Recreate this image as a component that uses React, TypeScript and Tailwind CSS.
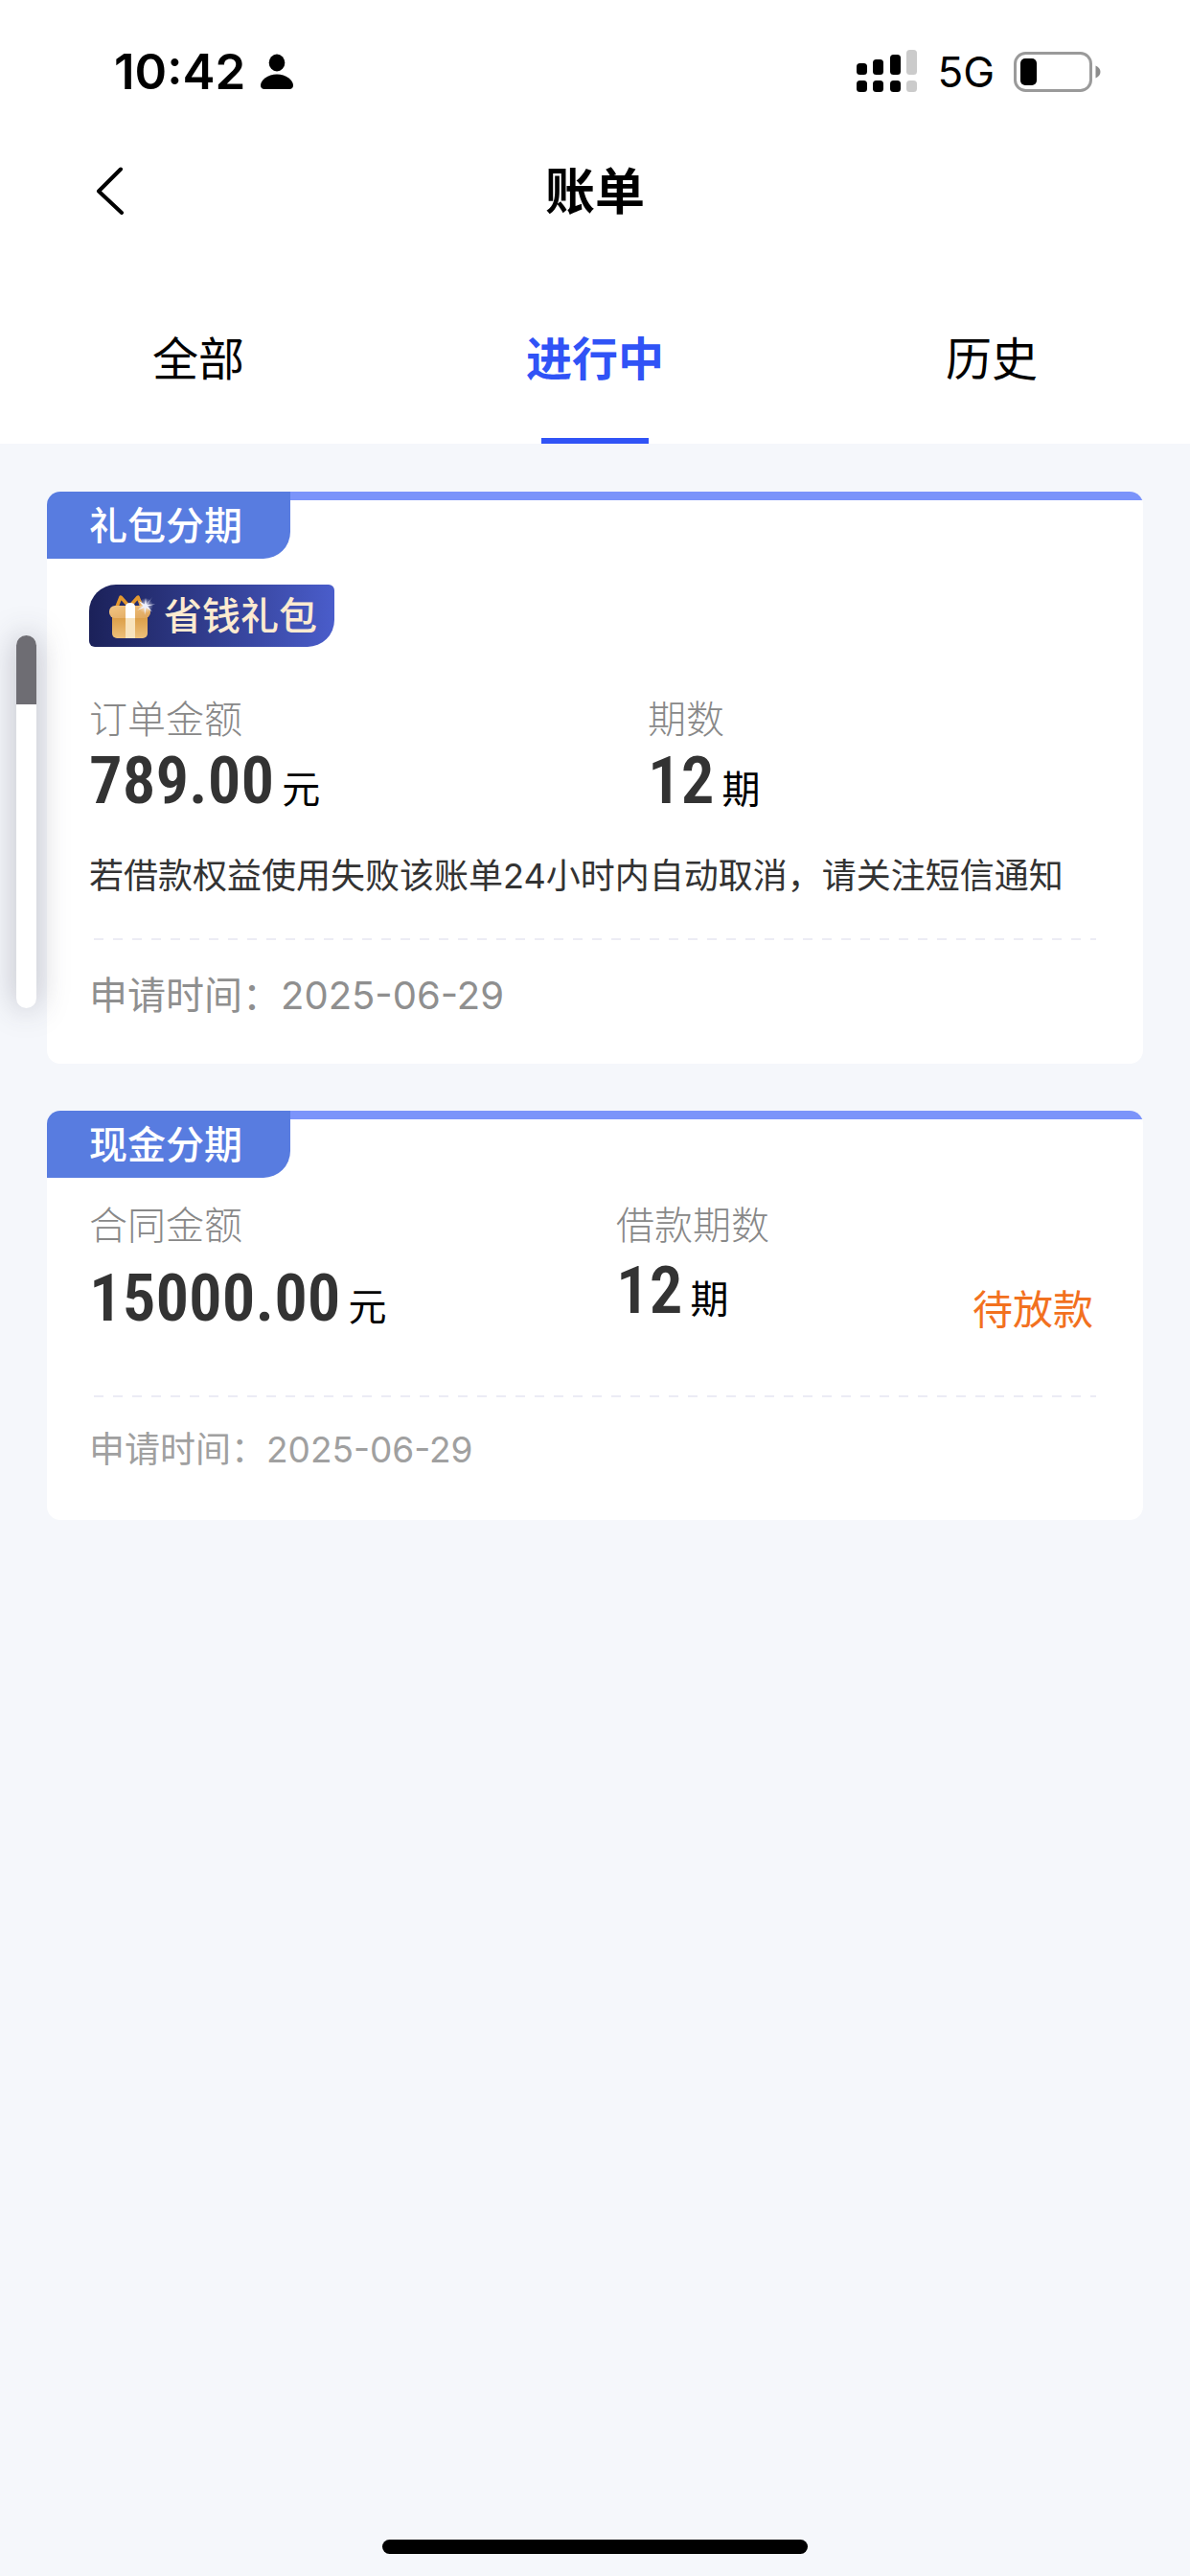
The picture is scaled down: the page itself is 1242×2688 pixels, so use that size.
import React, { useState } from "react";
import { clsx } from "clsx";

const TABS = ["全部", "进行中", "历史"];

const SignalIcon = () => (
  <svg width="64" height="46" viewBox="0 0 64 46" aria-hidden="true">
    <g fill="#000">
      <rect x="0" y="14" width="11" height="12" rx="3.5" />
      <rect x="17" y="10" width="11" height="16" rx="3.5" />
      <rect x="35" y="5" width="11" height="21" rx="3.5" />
      <rect x="0" y="32" width="11" height="12" rx="3.5" />
      <rect x="17" y="32" width="11" height="12" rx="3.5" />
      <rect x="35" y="32" width="11" height="12" rx="3.5" />
    </g>
    <g fill="#cbcbcb">
      <rect x="52" y="0" width="11" height="26" rx="3.5" />
      <rect x="52" y="32" width="11" height="12" rx="3.5" />
    </g>
  </svg>
);

const BatteryIcon = () => (
  <svg width="92" height="42" viewBox="0 0 92 42" aria-hidden="true">
    <rect x="1.5" y="1.5" width="79" height="39" rx="11" fill="none" stroke="#9a9a9a" strokeWidth="3" />
    <rect x="7" y="7" width="17" height="28" rx="5" fill="#000" />
    <path d="M85.5 14.5c3.2 1.2 5 3.7 5 6.5s-1.8 5.3-5 6.5z" fill="#8c8c8c" />
  </svg>
);

const PersonIcon = () => (
  <svg width="34" height="38" viewBox="0 0 34 38" aria-hidden="true">
    <ellipse cx="17" cy="9.5" rx="8.3" ry="9" />
    <path d="M17 21.5c9.5 0 17 6 17 11.5 0 2.5-1.5 4-4 4H4c-2.5 0-4-1.5-4-4 0-5.5 7.5-11.5 17-11.5z" />
  </svg>
);

const GiftIcon = () => (
  <svg width="50" height="46" viewBox="0 0 50 46" aria-hidden="true">
    <defs>
      <linearGradient id="giftLid" x1="0" y1="0" x2="1" y2="1">
        <stop offset="0" stopColor="#f2c684" />
        <stop offset="1" stopColor="#dfa65c" />
      </linearGradient>
      <linearGradient id="giftBox" x1="0" y1="0" x2="0" y2="1">
        <stop offset="0" stopColor="#d99a42" />
        <stop offset="1" stopColor="#eec07a" />
      </linearGradient>
      <radialGradient id="giftGlow">
        <stop offset="0" stopColor="#fff" stopOpacity="0.8" />
        <stop offset="1" stopColor="#fff" stopOpacity="0" />
      </radialGradient>
    </defs>
    <path d="M9 13 13 3l8 9M35 13 31 3l-8 9" fill="none" stroke="#e3982f" strokeWidth="3.5" strokeLinejoin="round" />
    <path d="M4 22h37v19a5 5 0 0 1-5 5H9a5 5 0 0 1-5-5z" fill="url(#giftBox)" />
    <rect x="1" y="12" width="43" height="13" rx="6" fill="url(#giftLid)" />
    <path d="M18 25h10v21H18z" fill="#f8e3bd" />
    <path d="M18 25V13c0-2.5 2-4 5-4s5 1.5 5 4v12z" fill="#fff" />
    <circle cx="39" cy="12" r="8" fill="url(#giftGlow)" />
    <path
      d="m39 12 7-9-5.5 8 8.5-.5-8 2 5 6-6.5-4.5L38 22l-.5-8-7.5 3 6.5-4.5-5-5.5 6.500 3.500L39 4l1 7z"
      fill="#eef1ff"
    />
  </svg>
);

const StatusBar = () => (
  <div className="flex h-[132px] items-start justify-between pt-[44px] pr-[92px] pl-[119px]">
    <div className="flex h-[62px] items-center gap-4">
      <span className="text-[51px] leading-[62px] font-semibold">10:42</span>
      <PersonIcon />
    </div>
    <div className="flex h-[62px] items-center gap-5">
      <SignalIcon />
      <span className="text-[44px] leading-[62px]">5G</span>
      <BatteryIcon />
    </div>
  </div>
);

const Amount = ({ value, unit }: { value: string; unit: string }) => (
  <p className="flex h-[70px] items-baseline gap-2">
    <span className="font-['Roboto_Condensed',Roboto,sans-serif] text-[69px] leading-[68px] font-semibold text-[#333]">
      {value}
    </span>
    <span className="text-[40px] leading-[40px]">{unit}</span>
  </p>
);

const Divider = () => (
  <div className="mx-[5px] h-[2px] bg-[repeating-linear-gradient(90deg,#ececf5_0px,#ececf5_10px,transparent_10px,transparent_20px)]" />
);

const BillCard = ({ title, children }: { title: string; children: React.ReactNode }) => (
  <section className="overflow-hidden rounded-[14px] bg-white">
    <div className="flex h-[70px] items-start">
      <h2 className="h-[70px] rounded-br-[28px] bg-[#587ce0] pr-[50px] pl-11 text-[40px] leading-[72px] font-medium text-white">
        {title}
      </h2>
      <div className="h-[9px] flex-1 bg-[#7b94fa]" />
    </div>
    <div className="px-11">{children}</div>
  </section>
);

export default function App() {
  const [active, setActive] = useState("进行中");

  return (
    <div className="relative flex min-h-screen flex-col bg-[#f5f7fb] font-[Inter,'Noto_Sans_CJK_SC',sans-serif] text-black">
      <header className="bg-white">
        <StatusBar />
        <div className="grid h-[134px] grid-cols-3 items-center px-[98px]">
          <button type="button" aria-label="返回" className="w-9">
            <svg width="34" height="50" viewBox="0 0 34 50" fill="none" stroke="#000" strokeWidth="4" strokeLinecap="round" strokeLinejoin="round">
              <path d="M28 2.5 5 25.5 29 48" />
            </svg>
          </button>
          <h1 className="pt-1 text-center text-[52px] leading-[64px] font-semibold">账单</h1>
        </div>
        <nav className="grid h-[197px] grid-cols-3">
          {TABS.map((tab) => (
            <button
              key={tab}
              type="button"
              onClick={() => setActive(tab)}
              className={clsx(
                "flex flex-col items-center justify-between pt-[73px] text-[48px] leading-[72px]",
                active === tab && "font-semibold text-[#3053f6]"
              )}
            >
              {tab}
              <span className={clsx("h-[6px] w-28", active === tab && "bg-[#3053f6]")} />
            </button>
          ))}
        </nav>
      </header>

      <main className="flex flex-col gap-[49px] px-[49px] pt-[50px]">
        <BillCard title="礼包分期">
          <div className="mt-[27px] flex h-[65px] w-fit items-center gap-2 rounded-tl-[28px] rounded-tr-[6px] rounded-br-[28px] rounded-bl-[6px] bg-linear-to-r from-[#1b2159] to-[#4a5dcb] pr-[18px] pl-5">
            <GiftIcon />
            <span className="text-[40px] leading-[60px] font-medium text-[#fdebd0]">省钱礼包</span>
          </div>
          <div className="mt-[46px] grid grid-cols-[583px_1fr]">
            <div>
              <p className="text-[40px] leading-[60px] font-light text-[#888]">订单金额</p>
              <Amount value="789.00" unit="元" />
            </div>
            <div>
              <p className="text-[40px] leading-[60px] font-light text-[#888]">期数</p>
              <Amount value="12" unit="期" />
            </div>
          </div>
          <p className="mt-[36px] mb-[38px] text-[36px] leading-[54px] text-[#333]">
            若借款权益使用失败该账单24小时内自动取消，请关注短信通知
          </p>
          <Divider />
          <p className="pt-[28px] pb-[41px] text-[40px] leading-[60px] text-[#8f8f8f]">申请时间：2025-06-29</p>
        </BillCard>

        <BillCard title="现金分期">
          <div className="mt-[20px] grid grid-cols-[550px_1fr_auto]">
            <div>
              <p className="text-[40px] leading-[60px] font-light text-[#888]">合同金额</p>
              <div className="pt-3">
                <Amount value="15000.00" unit="元" />
              </div>
            </div>
            <div>
              <p className="text-[40px] leading-[60px] font-light text-[#888]">借款期数</p>
              <div className="pt-1">
                <Amount value="12" unit="期" />
              </div>
            </div>
            <p className="self-end pr-2 text-[42px] leading-[48px] text-[#f2711f]">待放款</p>
          </div>
          <div className="mt-[65px]">
            <Divider />
          </div>
          <p className="pt-[28px] pb-[46px] text-[37px] leading-[54px] text-[#a0a0a0]">申请时间：2025-06-29</p>
        </BillCard>
      </main>

      <footer className="mt-auto flex justify-center pb-[23px]">
        <div className="h-[15px] w-[444px] rounded-full bg-black" />
      </footer>

      {/* floating scroll indicator, drawn above the cards */}
      <div className="absolute top-[663px] left-[17px] h-[389px] w-[21px] rounded-full bg-white shadow-[0_0_32px_rgba(60,60,80,0.35)]">
        <div className="h-[72px] rounded-t-full bg-[#6e6d73]" />
      </div>
    </div>
  );
}
